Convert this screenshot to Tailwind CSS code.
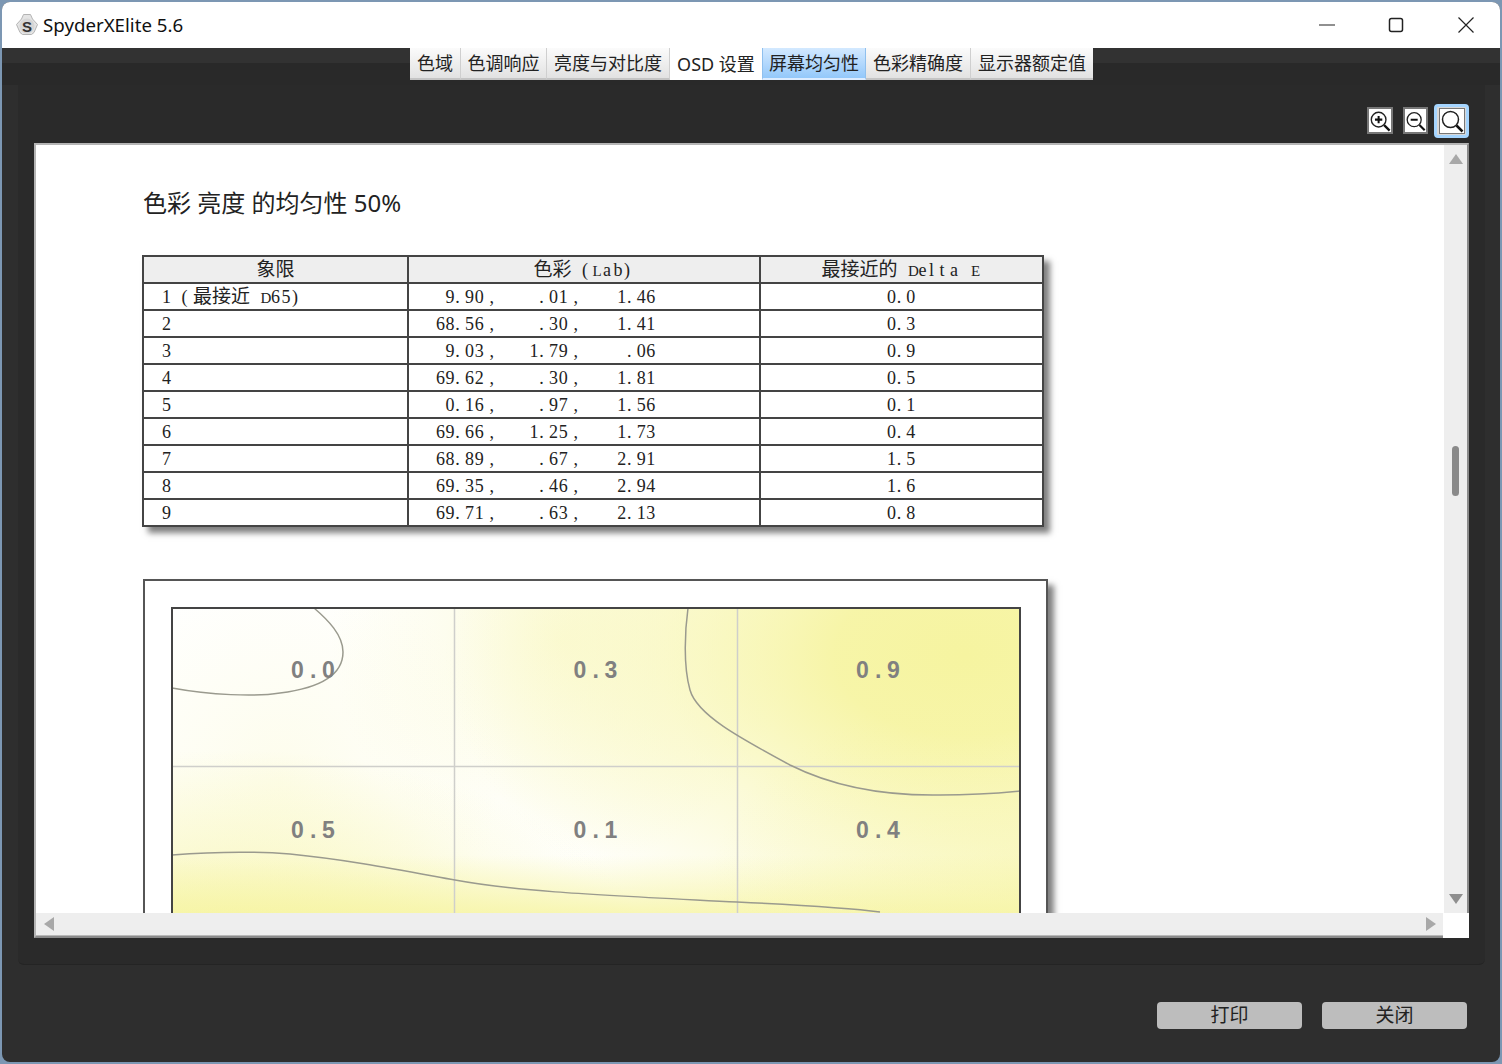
<!DOCTYPE html>
<html lang="zh-CN">
<head>
    <meta charset="UTF-8">
    <meta name="viewport" content="width=device-width, initial-scale=1.0">
    <title>SpyderXElite 5.6</title>
    <script src="https://cdn.jsdelivr.net/npm/@tailwindcss/browser@4"></script>
</head>
<body class="w-[1502px] h-[1064px] overflow-hidden bg-[#7c97b3] font-['Noto_Sans','Noto_Sans_CJK_SC',sans-serif]">

<div class="relative ml-[2px] mr-[2px] mt-[2px] h-[1060px] rounded-[8px] overflow-hidden bg-[#2e2e2e] flex flex-col">

    <!-- title bar -->
    <div class="h-[46px] shrink-0 bg-white flex items-center">
        <svg class="ml-[13px] w-[24px] h-[24px]" viewBox="0 0 24 24">
            <path d="M8.500 1.500h7l2 4.500 5 5.500-3.500 8-2.500 2H7.500L5 19.500l-3.500-8 5-5.500z" fill="#e4e4e4" stroke="#b4b4b4" stroke-width="1" stroke-linejoin="round"/>
            <circle cx="12" cy="13" r="7.500" fill="#d6d6d6"/>
            <text x="12" y="18.500" text-anchor="middle" font-family="Liberation Sans" font-weight="700" font-size="15" fill="#333">S</text>
        </svg>
        <span class="ml-[4px] text-[18.700px] leading-none text-[#111]">SpyderXElite 5.6</span>
        <div class="ml-auto flex items-center mr-[26px]">
            <svg class="w-[16px] h-[16px]" viewBox="0 0 16 16"><path d="M0 8h16" stroke="#222" stroke-width="1.200"/></svg>
            <svg class="ml-[53px] w-[16px] h-[16px]" viewBox="0 0 16 16"><rect x="1.500" y="1.500" width="13" height="13" rx="2" fill="none" stroke="#222" stroke-width="1.500"/></svg>
            <svg class="ml-[54px] w-[16px] h-[16px]" viewBox="0 0 16 16"><path d="M.5.5l15 15M15.500.5l-15 15" stroke="#222" stroke-width="1.200"/></svg>
        </div>
    </div>

    <!-- tab strip bands -->
    <div class="h-[15px] shrink-0 bg-[#323232]"></div>
    <div class="h-[22px] shrink-0 bg-[#292929]"></div>

    <!-- tabs sit over the bands -->
    <div class="absolute left-[408px] top-[46px] flex h-[32px] text-[18px] leading-none text-[#222]">
        <div class="w-[51px] flex items-center justify-center bg-linear-to-b from-[#fbfbfb] to-[#e2e2e2] border-r border-b-2 border-r-[#cfcfcf] border-b-[#c4c4c4]">色域</div>
        <div class="w-[86px] flex items-center justify-center bg-linear-to-b from-[#fbfbfb] to-[#e2e2e2] border-r border-b-2 border-r-[#cfcfcf] border-b-[#c4c4c4]">色调响应</div>
        <div class="w-[123px] flex items-center justify-center bg-linear-to-b from-[#fbfbfb] to-[#e2e2e2] border-r border-b-2 border-r-[#cfcfcf] border-b-[#c4c4c4]">亮度与对比度</div>
        <div class="w-[92px] flex items-center justify-center bg-white">OSD 设置</div>
        <div class="w-[104px] flex items-center justify-center bg-linear-to-b from-[#d3e9ff] to-[#93c8fa] border-x border-b-2 border-x-[#8fc0ee] border-b-[#dcecff]">屏幕均匀性</div>
        <div class="w-[105px] flex items-center justify-center bg-linear-to-b from-[#fbfbfb] to-[#e2e2e2] border-r border-b-2 border-r-[#cfcfcf] border-b-[#c4c4c4]">色彩精确度</div>
        <div class="w-[122px] flex items-center justify-center bg-linear-to-b from-[#fbfbfb] to-[#e2e2e2] border-b-2 border-b-[#c4c4c4]">显示器额定值</div>
    </div>

    <!-- main panel -->
    <div class="ml-[16px] mr-[15px] h-[880px] shrink-0 bg-[#2a2a2a] rounded-b-[6px] border-b border-[#242424] flex flex-col">

        <!-- zoom buttons -->
        <div class="h-[58px] shrink-0 flex justify-end items-start pt-[19px] pr-[16px]">
            <button class="mt-[3px] w-[26px] h-[27px] bg-white border-2 border-[#777] flex items-center justify-center">
                <svg class="w-[24px] h-[24px]" viewBox="0 0 24 24"><circle cx="10.500" cy="10.500" r="8" fill="none" stroke="#222" stroke-width="1.500"/><path d="M16.500 16.500l6 6" stroke="#111" stroke-width="2.500"/><path d="M6.500 10.500h8M10.500 6.500v8" stroke="#111" stroke-width="2.200"/></svg>
            </button>
            <button class="mt-[3px] ml-[10px] w-[25px] h-[27px] bg-white border-2 border-[#777] flex items-center justify-center">
                <svg class="w-[24px] h-[24px]" viewBox="0 0 24 24"><circle cx="10.500" cy="10.500" r="8" fill="none" stroke="#222" stroke-width="1.500"/><path d="M16.500 16.500l6 6" stroke="#111" stroke-width="2.500"/><path d="M6.500 10.500h8" stroke="#111" stroke-width="2.200"/></svg>
            </button>
            <button class="ml-[6px] w-[35px] h-[34px] rounded-[4px] border-[3px] border-[#a5d5ff] bg-[#d8d8d8] flex items-center justify-center">
                <svg class="w-[26px] h-[26px] bg-white border border-[#777]" viewBox="0 0 24 24"><circle cx="10.500" cy="10.500" r="8" fill="none" stroke="#222" stroke-width="1.500"/><path d="M16.500 16.500l6 6" stroke="#111" stroke-width="2.500"/></svg>
            </button>
        </div>

        <!-- report viewer -->
        <div class="mx-[16px] h-[795px] shrink-0 bg-white border-2 border-[#8a8a8a] border-t-[#b5b5b5] border-l-[#b5b5b5] flex flex-col">
            <div class="h-[768px] flex shrink-0">
                <div class="flex-1 overflow-hidden pl-[107px] pt-[42px]">
                    <h1 class="text-[24px] leading-[32px] h-[32px] text-[#222] whitespace-pre">色彩 亮度 的均匀性 50%</h1>

                    <table class="mt-[36px] -ml-px table-fixed w-[900px] border-collapse shadow-[6px_6px_6px_rgba(0,0,0,0.5)] font-['Liberation_Serif','Noto_Sans_CJK_SC',serif] text-[18px] leading-none text-[#222]">
                        <colgroup><col class="w-[265px]"><col class="w-[352px]"><col class="w-[283px]"></colgroup>
                        <thead>
                            <tr class="h-[27px] bg-[#eeeeee]">
                                <th class="border-2 border-[#444] font-normal text-[19px]">象限</th>
                                <th class="border-2 border-[#444] font-normal"><span class="text-[19px]">色彩</span><span class="whitespace-pre" data-mono> (Lab)</span></th>
                                <th class="border-2 border-[#444] font-normal"><span class="text-[19px]">最接近的</span><span class="whitespace-pre" data-mono> Delta E</span></th>
                            </tr>
                        </thead>
                        <tbody id="rows"></tbody>
                    </table>

                    <!-- uniformity chart, clipped by the scroll area -->
                    <div class="mt-[52px] w-[905px] h-[420px] bg-white border-2 border-[#555] shadow-[6px_6px_6px_rgba(0,0,0,0.5)] pl-[26px] pt-[26px]">
                        <svg class="block" width="850" height="320" viewBox="171 607 850 320">
                            <defs>
                                <radialGradient id="g1" gradientUnits="userSpaceOnUse" cx="965" cy="655" r="520" gradientTransform="translate(965 655) scale(1 .62) translate(-965 -655)">
                                    <stop offset="0" stop-color="#f6f4a0"/><stop offset=".25" stop-color="#f6f4a0" stop-opacity=".92"/><stop offset=".6" stop-color="#f6f4a0" stop-opacity=".42"/><stop offset="1" stop-color="#f6f4a0" stop-opacity="0"/>
                                </radialGradient>
                                <radialGradient id="g2" gradientUnits="userSpaceOnUse" cx="230" cy="960" r="420" gradientTransform="translate(230 960) scale(1 .5) translate(-230 -960)">
                                    <stop offset="0" stop-color="#f6f4a0" stop-opacity=".8"/><stop offset=".5" stop-color="#f6f4a0" stop-opacity=".42"/><stop offset="1" stop-color="#f6f4a0" stop-opacity="0"/>
                                </radialGradient>
                                <linearGradient id="g3" gradientUnits="userSpaceOnUse" x1="0" y1="855" x2="0" y2="915">
                                    <stop offset="0" stop-color="#f6f4a0" stop-opacity="0"/><stop offset="1" stop-color="#f6f4a0" stop-opacity=".8"/>
                                </linearGradient>
                                <radialGradient id="g4" gradientUnits="userSpaceOnUse" cx="1040" cy="880" r="330" gradientTransform="translate(1040 880) scale(1 .6) translate(-1040 -880)">
                                    <stop offset="0" stop-color="#f6f4a0" stop-opacity=".5"/><stop offset="1" stop-color="#f6f4a0" stop-opacity="0"/>
                                </radialGradient>
                                <radialGradient id="g5" gradientUnits="userSpaceOnUse" cx="560" cy="640" r="230">
                                    <stop offset="0" stop-color="#f6f4a0" stop-opacity=".35"/><stop offset="1" stop-color="#f6f4a0" stop-opacity="0"/>
                                </radialGradient>
                                <radialGradient id="g6" gradientUnits="userSpaceOnUse" cx="280" cy="780" r="220">
                                    <stop offset="0" stop-color="#f6f4a0" stop-opacity=".2"/><stop offset="1" stop-color="#f6f4a0" stop-opacity="0"/>
                                </radialGradient>
                            </defs>
                            <rect x="172" y="608" width="848" height="320" fill="#fff"/>
                            <rect x="172" y="608" width="848" height="320" fill="url(#g5)"/>
                            <rect x="172" y="608" width="848" height="320" fill="url(#g6)"/>
                            <rect x="172" y="608" width="848" height="320" fill="url(#g1)"/>
                            <rect x="172" y="608" width="848" height="320" fill="url(#g2)"/>
                            <rect x="172" y="608" width="848" height="320" fill="url(#g3)"/>
                            <rect x="172" y="608" width="848" height="320" fill="url(#g4)"/>
                            <path d="M454.500 608v320M737.500 608v320M172 766.500h848" stroke="#cfcfcb" stroke-width="1.500" fill="none"/>
                            <g fill="none" stroke="#9a9a8e" stroke-width="1.500">
                                <path d="M172 688C210 695 255 697 280 693C320 688 343 675 343 652C343 635 328 620 314 608"/>
                                <path d="M688 608C685 630 683 665 690 690C697 715 740 738 790 765C830 785 880 796 940 795C970 795 1000 793 1020 791"/>
                                <path d="M172 855C210 852 250 851 290 854C350 860 400 870 455 880C520 892 600 895 737 902C800 905 850 908 880 912"/>
                            </g>
                            <g font-family="Liberation Sans" font-weight="700" font-size="23" fill="#808080">
                                <text x="291 310 322" y="678">0.0</text><text x="573.500 592.500 604.500" y="678">0.3</text><text x="856 875 887" y="678">0.9</text>
                                <text x="291 310 322" y="838">0.5</text><text x="573.500 592.500 604.500" y="838">0.1</text><text x="856 875 887" y="838">0.4</text>
                            </g>
                            <rect x="172" y="608" width="848" height="330" fill="none" stroke="#444" stroke-width="2"/>
                        </svg>
                    </div>
                </div>
                <!-- vertical scrollbar -->
                <div class="w-[23px] bg-[#eeeeee] flex flex-col items-center justify-between py-[9px] relative">
                    <svg class="w-[14px] h-[10px]" viewBox="0 0 14 10"><path d="M7 0l7 10H0z" fill="#a8a8a8"/></svg>
                    <div class="absolute left-[8px] top-[301px] w-[7px] h-[50px] rounded-[4px] bg-[#8a8a8a]"></div>
                    <svg class="w-[14px] h-[10px]" viewBox="0 0 14 10"><path d="M7 10L14 0H0z" fill="#8f8f8f"/></svg>
                </div>
            </div>
            <!-- horizontal scrollbar -->
            <div class="h-[23px] shrink-0 flex">
                <div class="flex-1 bg-[#eeeeee] border-b border-[#b8b8b8] flex items-center justify-between pl-[8px] pr-[7px]">
                    <svg class="w-[10px] h-[14px]" viewBox="0 0 10 14"><path d="M0 7l10-7v14z" fill="#a8a8a8"/></svg>
                    <svg class="w-[10px] h-[14px]" viewBox="0 0 10 14"><path d="M10 7L0 0v14z" fill="#a8a8a8"/></svg>
                </div>
                <div class="w-[26px] h-[25px] -mr-[2px] bg-white relative"></div>
            </div>
        </div>
    </div>

    <!-- bottom buttons -->
    <div class="flex justify-end gap-[20px] pt-[37px] pr-[33px]">
        <button class="w-[145px] h-[27px] rounded-[4px] bg-[#bdbdbd] text-[19px] leading-none text-[#222]">打印</button>
        <button class="w-[145px] h-[27px] rounded-[4px] bg-[#bdbdbd] text-[19px] leading-none text-[#222]">关闭</button>
    </div>
</div>

<script>
    // report data: quadrant, Lab values, nearest delta E
    const rows = [
        ['1', '9.90,', '.01,', '1.46', '0.0'],
        ['2', '68.56,', '.30,', '1.41', '0.3'],
        ['3', '9.03,', '1.79,', '.06', '0.9'],
        ['4', '69.62,', '.30,', '1.81', '0.5'],
        ['5', '0.16,', '.97,', '1.56', '0.1'],
        ['6', '69.66,', '1.25,', '1.73', '0.4'],
        ['7', '68.89,', '.67,', '2.91', '1.5'],
        ['8', '69.35,', '.46,', '2.94', '1.6'],
        ['9', '69.71,', '.63,', '2.13', '0.8'],
    ];

    // the report font is fixed pitch with a serif face, so each character gets its own cell
    function mono(text) {
        return [...text].map(c => {
            if (c === ' ') return '<span class="inline-block w-[9.700px]">&nbsp;</span>';
            if (c === ',') return '<span class="inline-block w-[9.700px] text-right">,</span>';
            return `<span class="inline-block w-[9.700px] text-left">${c}</span>`;
        }).join('');
    }

    // latin labels run a little wider than the digits
    function monoWide(text) {
        return [...text].map(c => {
            if (c === ' ') return '<span class="inline-block w-[10.500px]">&nbsp;</span>';
            if (/[A-Z]/.test(c)) return `<span class="inline-block w-[10.500px] text-left text-[15px]">${c}</span>`;
            return `<span class="inline-block w-[10.500px] text-left">${c}</span>`;
        }).join('');
    }

    document.querySelectorAll('[data-mono]').forEach(el => { el.innerHTML = monoWide(el.textContent); });

    document.getElementById('rows').innerHTML = rows.map((r, i) => `
        <tr class="h-[27px]">
            <td class="border-2 border-[#444] pl-[18px] whitespace-pre">${mono(r[0])}${i === 0 ? mono(' (') + '<span class="text-[19px] ml-[2px]">最接近</span>' + monoWide(' D65)') : ''}</td>
            <td class="border-2 border-[#444]"><span class="inline-block w-[85px] text-right">${mono(r[1])}</span><span class="inline-block w-[84px] text-right">${mono(r[2])}</span><span class="inline-block w-[78px] text-right">${mono(r[3])}</span></td>
            <td class="border-2 border-[#444] text-center">${mono(r[4])}</td>
        </tr>`).join('');
</script>
</body>
</html>
